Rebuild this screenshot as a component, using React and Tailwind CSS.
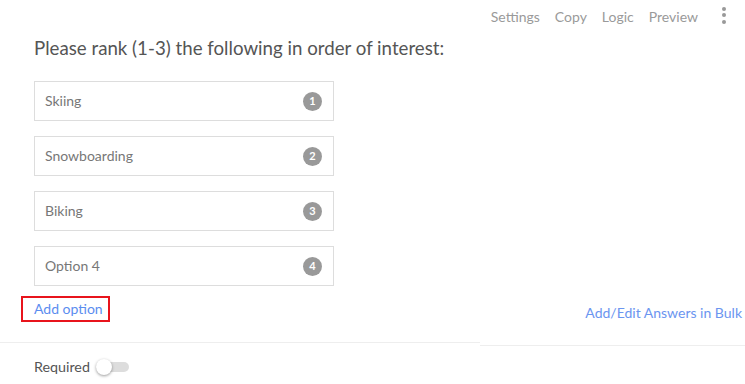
import { useState } from 'react';

const options = ['Skiing', 'Snowboarding', 'Biking', 'Option 4'];

const App = () => {
  const [required, setRequired] = useState(false);

  return (
    <div className="w-[745px] h-[384px] bg-white overflow-hidden font-['Lato','Noto_Sans',sans-serif]">
      {/* top menu */}
      <div className="flex justify-end items-center h-[32px] pr-[19px] text-[14px] text-[#9a9a9a]">
        <div className="flex items-center gap-[15px]">
          <span>Settings</span>
          <span>Copy</span>
          <span>Logic</span>
          <span>Preview</span>
        </div>
        <div className="ml-[24px] flex flex-col gap-[2.5px] items-center -mt-[2px]">
          <span className="w-[4px] h-[4px] rounded-full bg-[#999]" />
          <span className="w-[4px] h-[4px] rounded-full bg-[#999]" />
          <span className="w-[4px] h-[4px] rounded-full bg-[#999]" />
        </div>
      </div>

      <div className="flex items-start">
        <div className="w-[480px] border-b border-[#eee]">
          <div className="pl-[34px] pb-[20px]">
            <h2 className="text-[18.7px] text-[#555] leading-[32px]">Please rank (1-3) the following in order of interest:</h2>
            <ul className="mt-[17px] flex flex-col gap-[15px] w-[300px]">
              {options.map((opt, i) => (
                <li key={opt} className="h-[40px] border border-[#ddd] flex items-center justify-between pl-[10px] pr-[11px]">
                  <span className="text-[14px] text-[#777] -mt-[1px]">{opt}</span>
                  <span className="w-[19px] h-[19px] rounded-full bg-[#999] text-white text-[11px] font-bold flex items-center justify-center">{i + 1}</span>
                </li>
              ))}
            </ul>
            <div className="mt-[10px] -ml-[13px]">
              <button className="border-2 border-[#e8141c] pl-[11px] pr-[5px] h-[26px] text-[14px] text-[#5b8def] leading-none">Add option</button>
            </div>
          </div>
        </div>
        <div className="flex-1 h-[314px] flex flex-col justify-end">
          <div className="text-right pr-[3px] text-[14px] text-[#6b95f0] pb-[22px]">Add/Edit Answers in Bulk</div>
          <div className="border-b border-[#eee]" />
        </div>
      </div>

      <div className="pl-[34px] pt-[10px] flex items-center gap-[6px]">
        <span className="text-[14.3px] text-[#555]">Required</span>
        <button onClick={() => setRequired(!required)} className="relative w-[33px] h-[16px] flex items-center">
          <span className="w-full h-[10px] rounded-full bg-[#ddd]" />
          <span className="absolute left-0 top-0 w-[16px] h-[16px] rounded-full bg-white shadow-[0_1px_3px_rgba(0,0,0,0.4)]" />
        </button>
      </div>
    </div>
  );
};

export default App;
